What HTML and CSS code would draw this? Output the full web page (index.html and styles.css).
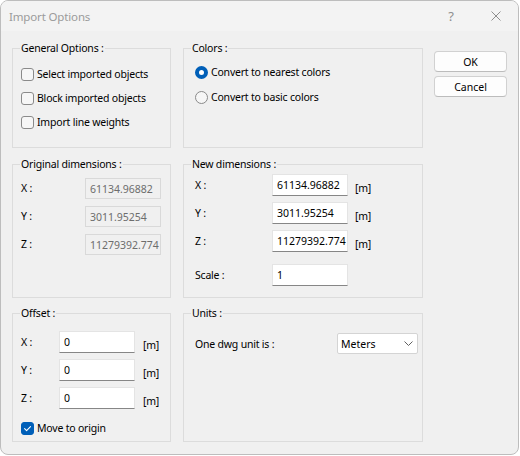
FILE: index.html
```html
<!DOCTYPE html>
<html>
<head>
<meta charset="utf-8">
<title>Import Options</title>
<link rel="stylesheet" href="styles.css">
</head>
<body>
<div class="window">
  <div class="titlebar">
    <span class="title">Import Options</span>
    <div class="cap help">?</div>
    <div class="cap close">
      <svg width="10" height="10" viewBox="0 0 10 10"><path d="M0.5 0.5 L9.5 9.5 M9.5 0.5 L0.5 9.5" stroke="#8e8e8e" stroke-width="1" fill="none"/></svg>
    </div>
  </div>
  <div class="client">
    <div class="groups">
      <fieldset class="group r1">
        <legend>General Options :</legend>
        <div class="checklist">
          <label class="check"><span class="box"></span>Select imported objects</label>
          <label class="check"><span class="box"></span>Block imported objects</label>
          <label class="check"><span class="box"></span>Import line weights</label>
        </div>
      </fieldset>
      <fieldset class="group r1">
        <legend>Colors :</legend>
        <div class="radiolist">
          <label class="radio"><span class="dot on"></span>Convert to nearest colors</label>
          <label class="radio"><span class="dot"></span>Convert to basic colors</label>
        </div>
      </fieldset>
      <fieldset class="group r2">
        <legend>Original dimensions :</legend>
        <div class="fields orig">
          <span class="lbl">X :</span><input class="ro" readonly value="61134.96882">
          <span class="lbl">Y :</span><input class="ro" readonly value="3011.95254">
          <span class="lbl">Z :</span><input class="ro" readonly value="11279392.774">
        </div>
      </fieldset>
      <fieldset class="group r2">
        <legend>New dimensions :</legend>
        <div class="fields newdim">
          <span class="lbl">X :</span><input class="tb" value="61134.96882"><span class="unit">[m]</span>
          <span class="lbl">Y :</span><input class="tb" value="3011.95254"><span class="unit">[m]</span>
          <span class="lbl">Z :</span><input class="tb" value="11279392.774"><span class="unit">[m]</span>
          <span class="lbl scale">Scale :</span><input class="tb scale" value="1"><span></span>
        </div>
      </fieldset>
      <fieldset class="group r3">
        <legend>Offset :</legend>
        <div class="fields offset">
          <span class="lbl">X :</span><input class="tb" value="0"><span class="unit">[m]</span>
          <span class="lbl">Y :</span><input class="tb" value="0"><span class="unit">[m]</span>
          <span class="lbl">Z :</span><input class="tb" value="0"><span class="unit">[m]</span>
        </div>
        <label class="check origin"><span class="box checked"><svg width="11" height="11" viewBox="0 0 11 11"><path d="M2.6 5.7 L4.6 7.7 L8.5 3.6" stroke="#ffffff" stroke-width="1.1" fill="none" stroke-linecap="round" stroke-linejoin="round"/></svg></span>Move to origin</label>
      </fieldset>
      <fieldset class="group r3">
        <legend>Units :</legend>
        <div class="units">
          <span class="ulbl">One dwg unit is :</span>
          <div class="select"><span>Meters</span><svg width="9" height="5" viewBox="0 0 9 5"><path d="M0.5 0.5 L4.5 4.5 L8.5 0.5" stroke="#606060" stroke-width="1" fill="none"/></svg></div>
        </div>
      </fieldset>
    </div>
    <div class="buttons">
      <button class="btn">OK</button>
      <button class="btn">Cancel</button>
    </div>
  </div>
</div>
</body>
</html>
```

FILE: styles.css
```css
html, body {
  margin: 0;
  padding: 0;
  background: #ffffff;
}

body {
  font-family: "Noto Sans", "Open Sans", sans-serif;
  font-size: 10.5px;
  letter-spacing: -0.2px;
  color: #000000;
}

.window {
  width: 519px;
  height: 455px;
  box-sizing: border-box;
  border: 1px solid #bdbdbd;
  border-radius: 8px;
  background: #f0f0f0;
  overflow: hidden;
}

.titlebar {
  height: 30px;
  display: flex;
  align-items: center;
  background: #f3f3f3;
}

.title {
  flex: 1;
  padding-left: 8px;
  font-size: 11.5px;
  letter-spacing: -0.15px;
  color: #9b9b9b;
}

.cap {
  height: 30px;
  display: flex;
  align-items: center;
  justify-content: center;
  color: #8e8e8e;
}

.help {
  width: 46px;
  font-size: 13px;
  letter-spacing: 0;
}

.close {
  width: 44px;
}

.client {
  display: flex;
  gap: 11px;
  padding: 9px 0 0 11px;
}

.groups {
  display: grid;
  grid-template-columns: 159px 240px;
  column-gap: 12px;
  align-items: start;
}

.group {
  margin: 0;
  padding: 0;
  min-width: 0;
  box-sizing: border-box;
  border: 1px solid #dcdcdc;
}

.group legend {
  margin-left: 7px;
  padding: 0 1px;
  line-height: 17px;
}

.r1 { height: 108px; }
.r2 { height: 142px; margin-top: 8px; }
.r3 { height: 137px; margin-top: 7px; }

.checklist {
  display: flex;
  flex-direction: column;
  gap: 7px;
  padding: 9px 0 0 8px;
}

.check, .radio {
  display: flex;
  align-items: center;
  height: 17px;
  line-height: 17px;
}

.box {
  width: 13px;
  height: 13px;
  box-sizing: border-box;
  border: 1px solid #8a8a8a;
  border-radius: 3px;
  background: #f6f6f6;
  margin-right: 3px;
  display: flex;
  align-items: center;
  justify-content: center;
}

.box.checked {
  background: #005fb8;
  border-color: #005fb8;
}

.radiolist {
  display: flex;
  flex-direction: column;
  gap: 8px;
  padding: 7px 0 0 11px;
}

.dot {
  width: 13px;
  height: 13px;
  box-sizing: border-box;
  border: 1px solid #8a8a8a;
  border-radius: 50%;
  background: #f6f6f6;
  margin-right: 3px;
}

.dot.on {
  border: 4px solid #005fb8;
  background: #ffffff;
}

.fields {
  display: grid;
  align-items: center;
}

.orig {
  grid-template-columns: 64px 76px;
  grid-auto-rows: 21px;
  row-gap: 7px;
  padding: 5px 0 0 8px;
}

.newdim {
  grid-template-columns: 70px 76px auto;
  grid-auto-rows: 22px;
  column-gap: 7px;
  row-gap: 6px;
  padding: 1px 0 0 11px;
}

.newdim .scale {
  margin-top: 12px;
}

.offset {
  grid-template-columns: 30px 76px auto;
  grid-auto-rows: 22px;
  column-gap: 8px;
  row-gap: 6px;
  padding: 9px 0 0 8px;
}

.lbl {
  line-height: 17px;
}

.unit {
  align-self: end;
  line-height: 17px;
  margin-bottom: -1px;
}

input {
  font-family: inherit;
  font-size: 10.5px;
  letter-spacing: 0;
  box-sizing: border-box;
  width: 76px;
  margin: 0;
  padding: 0 0 0 4px;
  outline: none;
  border-radius: 0;
}

.ro {
  height: 21px;
  background: #f0f0f0;
  border: 1px solid #d9d9d9;
  color: #6d6d6d;
}

.tb {
  height: 22px;
  background: #ffffff;
  border: 1px solid #e4e4e4;
  border-bottom-color: #868686;
  color: #000000;
}

.origin {
  margin: 11px 0 0 8px;
}

.units {
  display: flex;
  align-items: center;
  padding: 11px 0 0 11px;
}

.ulbl {
  width: 142px;
}

.select {
  width: 81px;
  height: 21px;
  box-sizing: border-box;
  border: 1px solid #d4d4d4;
  border-radius: 2px;
  background: #ffffff;
  display: flex;
  align-items: center;
  justify-content: space-between;
  padding: 0 4px 0 3px;
  letter-spacing: 0;
}

.buttons {
  display: flex;
  flex-direction: column;
  gap: 4px;
  padding-top: 11px;
}

.btn {
  font-family: inherit;
  font-size: 10.5px;
  letter-spacing: 0;
  width: 73px;
  height: 21px;
  margin: 0;
  padding: 0;
  background: #fdfdfd;
  border: 1px solid #d1d1d1;
  border-bottom-color: #bcbcbc;
  border-radius: 4px;
  color: #000000;
}
```
